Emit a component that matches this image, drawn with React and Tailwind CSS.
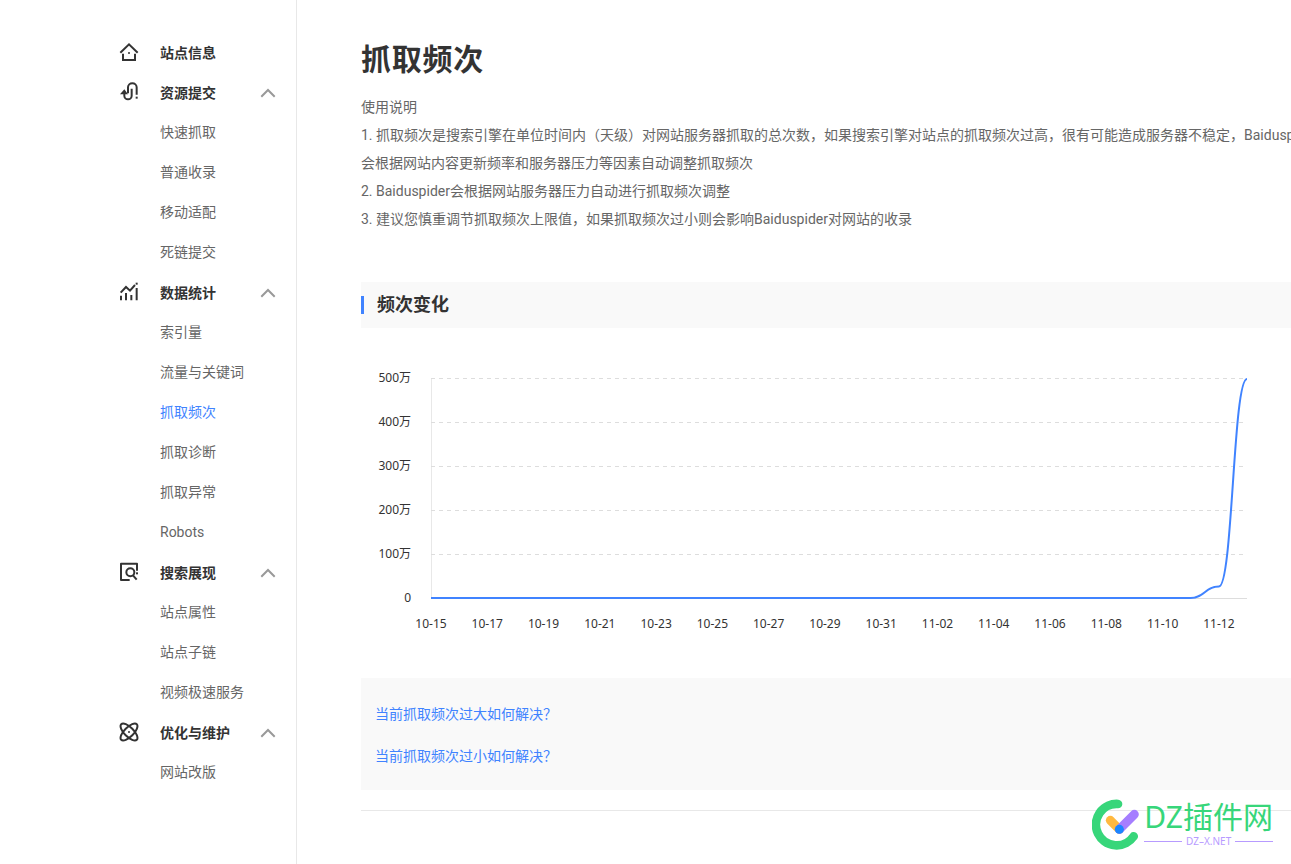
const menu = [
  { title: "站点信息", icon: HomeIcon, items: [] },
  {
    title: "资源提交",
    icon: SubmitIcon,
    items: ["快速抓取", "普通收录", "移动适配", "死链提交"],
  },
  {
    title: "数据统计",
    icon: StatsIcon,
    items: ["索引量", "流量与关键词", "抓取频次", "抓取诊断", "抓取异常", "Robots"],
  },
  {
    title: "搜索展现",
    icon: SearchIcon,
    items: ["站点属性", "站点子链", "视频极速服务"],
  },
  { title: "优化与维护", icon: AtomIcon, items: ["网站改版"] },
];

const active = "抓取频次";

const yLabels = ["500万", "400万", "300万", "200万", "100万", "0"];
const xLabels = [
  "10-15", "10-17", "10-19", "10-21", "10-23", "10-25", "10-27", "10-29",
  "10-31", "11-02", "11-04", "11-06", "11-08", "11-10", "11-12",
];

// 30 days of data, value in 万
const values = [...Array(28).fill(0), 26, 498];

function Icon({ children }) {
  return (
    <svg
      viewBox="0 0 60 60"
      className="size-5 shrink-0"
      fill="none"
      stroke="#333"
      strokeWidth="6"
      aria-hidden="true"
    >
      {children}
    </svg>
  );
}

function HomeIcon() {
  return (
    <Icon>
      <path d="M4 32 30 7l26 25M12 35v19h36V35" />
      <circle cx="30" cy="33" r="3" fill="#333" stroke="none" />
    </Icon>
  );
}

function SubmitIcon() {
  return (
    <Icon>
      <path d="M16 30v11a11 11 0 0 0 22 0V20M27 34V16a13 12 0 0 1 26 0v22" />
      <path d="M3 37 16 22l11 15z" fill="#333" stroke="none" />
      <rect x="50" y="44" width="6" height="6" fill="#333" stroke="none" />
    </Icon>
  );
}

function StatsIcon() {
  return (
    <Icon>
      <path d="M6 55V41M21 55V33M37 55V39M53 55V18M5 32 21 15l12 11L48 9" />
      <rect x="50" y="2" width="6" height="6" fill="#333" stroke="none" />
    </Icon>
  );
}

function SearchIcon() {
  return (
    <Icon>
      <path d="M54 26V5H6v49h26" strokeLinejoin="round" />
      <circle cx="34" cy="31" r="12" />
      <path d="m42 40 11 13" />
      <rect x="51" y="31" width="6" height="6" fill="#333" stroke="none" />
    </Icon>
  );
}

function AtomIcon() {
  return (
    <Icon>
      <ellipse cx="30" cy="30" rx="33" ry="14" transform="rotate(45 30 30)" />
      <ellipse cx="30" cy="30" rx="33" ry="14" transform="rotate(-45 30 30)" />
      <circle cx="30" cy="30" r="3" fill="#333" stroke="none" />
    </Icon>
  );
}

function Sidebar() {
  return (
    <nav className="w-[297px] shrink-0 border-r border-[#e8e8e8] pt-8 pr-5 pl-[119px]">
      {menu.map(({ title, icon: MenuIcon, items }) => (
        <div key={title}>
          <button type="button" className="flex h-10 w-full items-center gap-[21px] font-bold text-[#333]">
            <MenuIcon />
            <span className="pt-0.5">{title}</span>
            {items.length > 0 && (
              <svg viewBox="0 0 16 16" className="ml-auto size-4" fill="none" stroke="#999" strokeWidth="2" aria-hidden="true">
                <path d="m2 12 6-6 6 6" strokeLinecap="square" />
              </svg>
            )}
          </button>
          <ul className="pl-[41px]">
            {items.map((item) => (
              <li key={item} className="h-10 leading-10">
                <a href="#" className={item === active ? "text-[#4083ff]" : "text-[#666]"}>
                  {item}
                </a>
              </li>
            ))}
          </ul>
        </div>
      ))}
    </nav>
  );
}

function Chart() {
  const left = 70;
  const top = 50;
  const width = 816;
  const height = 220;
  const step = width / (values.length - 1);

  const points = values.map((v, i) => [left + i * step, top + height - (v / 500) * height]);
  let line = `M${points[0].join(" ")}`;
  for (let i = 1; i < points.length; i++) {
    const [x0, y0] = points[i - 1];
    const [x1, y1] = points[i];
    const mid = (x0 + x1) / 2;
    line += `C${mid} ${y0} ${mid} ${y1} ${x1} ${y1}`;
  }

  return (
    <svg
      width="960"
      height="350"
      viewBox="0 0 960 350"
      className="block font-['Noto_Sans','Noto_Sans_CJK_SC',sans-serif] text-xs"
      role="img"
      aria-label="频次变化"
    >
      <path d={`M${left + 0.5} ${top}v${height}`} stroke="#e8e8e8" />
      {yLabels.map((label, i) => {
        const y = top + i * 44;
        return (
          <g key={label}>
            <path
              d={`M${left} ${y + 0.5}h${width}`}
              stroke="#ddd"
              strokeDasharray={label === "0" ? undefined : "4 4"}
            />
            <text x={left - 20} y={y + 4} textAnchor="end" fill="#333">
              {label}
            </text>
          </g>
        );
      })}
      {xLabels.map((label, i) => (
        <text key={label} x={left + i * 2 * step} y={top + height + 30} textAnchor="middle" fill="#333">
          {label}
        </text>
      ))}
      <path d={line} fill="none" stroke="#4083ff" strokeWidth="2" />
    </svg>
  );
}

function Watermark() {
  return (
    <div className="absolute right-[18px] bottom-[14px] flex items-start gap-1 font-['Noto_Sans','Noto_Sans_CJK_SC',sans-serif]">
      <svg viewBox="0 0 144 153" width="48" height="51" fill="none" strokeLinecap="round" aria-hidden="true">
        <path d="M78 15A62 62 0 1 0 125 112" stroke="#37d67a" strokeWidth="26" />
        <path d="m55 64 27 27" stroke="#ffb940" strokeWidth="27" />
        <path d="m127 46-45 45" stroke="#a57eff" strokeWidth="27" />
        <path d="M82 91h.1" stroke="#1a86ff" strokeWidth="27" />
      </svg>
      <div>
        <div className="text-[30px] leading-9 text-[#37d67a]">DZ插件网</div>
        <div className="flex items-center gap-1 text-[10px] leading-3 text-[#b79bff]">
          <span className="h-px flex-1 bg-[#b79bff]" />
          DZ–X.NET
          <span className="h-px flex-1 bg-[#b79bff]" />
        </div>
      </div>
    </div>
  );
}

export default function App() {
  return (
    <div className="relative flex min-h-screen overflow-hidden bg-white font-['Roboto','Noto_Sans_CJK_SC',sans-serif] text-sm">
      <Sidebar />

      <main className="min-w-[1024px] flex-1 pt-10 pl-16">
        <h1 className="text-[30px] leading-10 font-bold tracking-wide text-[#333]">抓取频次</h1>

        <div className="mt-[13px] leading-7 text-[#666]">
          <p>使用说明</p>
          <p>
            1. 抓取频次是搜索引擎在单位时间内（天级）对网站服务器抓取的总次数，如果搜索引擎对站点的抓取频次过高，很有可能造成服务器不稳定，Baiduspider会根据网站内容更新频率和服务器压力等因素自动调整抓取频次
          </p>
          <p>2. Baiduspider会根据网站服务器压力自动进行抓取频次调整</p>
          <p>3. 建议您慎重调节抓取频次上限值，如果抓取频次过小则会影响Baiduspider对网站的收录</p>
        </div>

        <div className="mt-[49px] flex h-[46px] items-center bg-[#f9f9f9]">
          <h2 className="border-l-3 border-[#4083ff] pl-[13px] text-lg leading-[18px] font-bold text-[#333]">
            频次变化
          </h2>
        </div>

        <Chart />

        <div className="flex flex-col items-start bg-[#f9f9f9] px-[14px] pt-[15px] pb-[13px] leading-[42px] text-[#4083ff]">
          <a href="#">当前抓取频次过大如何解决？</a>
          <a href="#">当前抓取频次过小如何解决？</a>
        </div>

        <hr className="mt-5 border-[#e8e8e8]" />
      </main>

      <Watermark />
    </div>
  );
}
